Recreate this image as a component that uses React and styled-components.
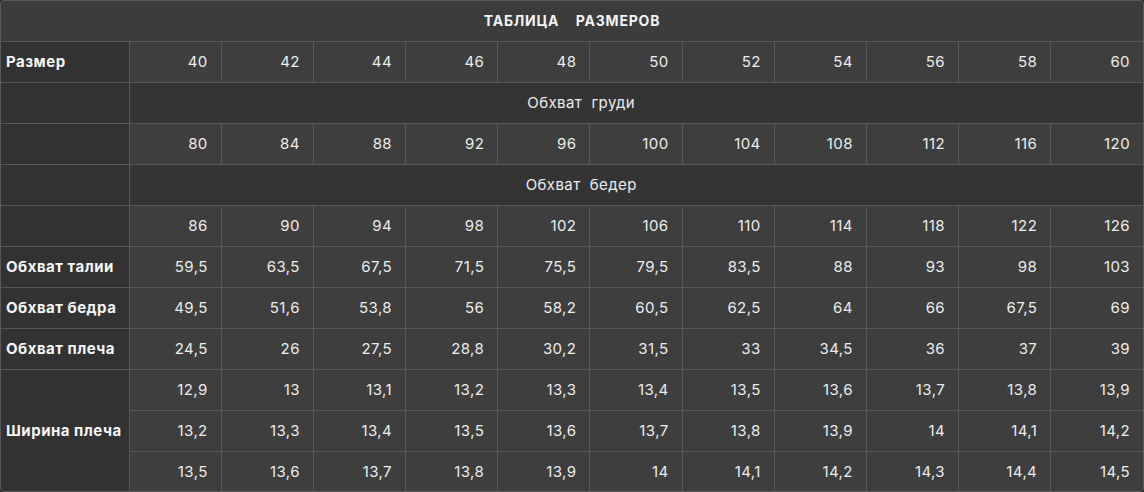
import React from "react";
import styled, { createGlobalStyle } from "styled-components";

const GlobalStyle = createGlobalStyle`
  body {
    margin: 0;
    background: #2e2e2e;
    font-family: Inter, "Noto Sans", sans-serif;
  }
`;

const Wrapper = styled.div`
  width: 1144px;
  height: 492px;
  box-sizing: border-box;
  border: 1px solid #5a5a5a;
  border-radius: 4px;
  overflow: hidden;
  background: #3e3e3e;
`;

const Table = styled.table`
  width: 100%;
  border-collapse: collapse;
  border-style: hidden;
  table-layout: fixed;
  color: #ececec;
  font-size: 15px;
  letter-spacing: 0.4px;
`;

const Row = styled.tr`
  height: ${(p) => (p.$head ? 40 : 41)}px;
`;

const Title = styled.th`
  background: #3c3c3c;
  border: 1px solid #575757;
  font-size: 14px;
  font-weight: 700;
  letter-spacing: 0.8px;
  color: #f4f4f4;
  white-space: pre;
  text-align: center;
  padding: 0;
`;

const Label = styled.td`
  background: #323232;
  border: 1px solid #575757;
  font-weight: 700;
  letter-spacing: 0.5px;
  color: #f6f6f6;
  padding: 0 0 0 5px;
  text-align: left;
  white-space: nowrap;
`;

const Cell = styled.td`
  background: #3e3e3e;
  border: 1px solid #575757;
  text-align: right;
  padding: 0 13px 0 0;
`;

const Section = styled.td`
  background: #343434;
  border: 1px solid #575757;
  text-align: center;
  white-space: pre;
  padding: 0 110px 0 0;
`;

const sizes = [40, 42, 44, 46, 48, 50, 52, 54, 56, 58, 60];
const chest = [80, 84, 88, 92, 96, 100, 104, 108, 112, 116, 120];
const hips = [86, 90, 94, 98, 102, 106, 110, 114, 118, 122, 126];

const measures = [
  { label: "Обхват талии", values: ["59,5", "63,5", "67,5", "71,5", "75,5", "79,5", "83,5", "88", "93", "98", "103"] },
  { label: "Обхват бедра", values: ["49,5", "51,6", "53,8", "56", "58,2", "60,5", "62,5", "64", "66", "67,5", "69"] },
  { label: "Обхват плеча", values: ["24,5", "26", "27,5", "28,8", "30,2", "31,5", "33", "34,5", "36", "37", "39"] },
];

const shoulder = [
  ["12,9", "13", "13,1", "13,2", "13,3", "13,4", "13,5", "13,6", "13,7", "13,8", "13,9"],
  ["13,2", "13,3", "13,4", "13,5", "13,6", "13,7", "13,8", "13,9", "14", "14,1", "14,2"],
  ["13,5", "13,6", "13,7", "13,8", "13,9", "14", "14,1", "14,2", "14,3", "14,4", "14,5"],
];

const Cells = ({ values }) => values.map((v, i) => <Cell key={i}>{v}</Cell>);

export default function App() {
  return (
    <>
      <GlobalStyle />
      <Wrapper>
        <Table>
          <colgroup>
            <col style={{ width: 128 }} />
            {sizes.map((s) => (
              <col key={s} />
            ))}
          </colgroup>
          <tbody>
            <Row $head>
              <Title colSpan={12}>{"ТАБЛИЦА    РАЗМЕРОВ"}</Title>
            </Row>
            <Row>
              <Label>Размер</Label>
              <Cells values={sizes} />
            </Row>
            <Row>
              <Label />
              <Section colSpan={11}>{"Обхват  груди"}</Section>
            </Row>
            <Row>
              <Label />
              <Cells values={chest} />
            </Row>
            <Row>
              <Label />
              <Section colSpan={11}>{"Обхват  бедер"}</Section>
            </Row>
            <Row>
              <Label />
              <Cells values={hips} />
            </Row>
            {measures.map((m) => (
              <Row key={m.label}>
                <Label>{m.label}</Label>
                <Cells values={m.values} />
              </Row>
            ))}
            {shoulder.map((vals, i) => (
              <Row key={i}>
                {i === 0 && <Label rowSpan={3}>Ширина плеча</Label>}
                <Cells values={vals} />
              </Row>
            ))}
          </tbody>
        </Table>
      </Wrapper>
    </>
  );
}
